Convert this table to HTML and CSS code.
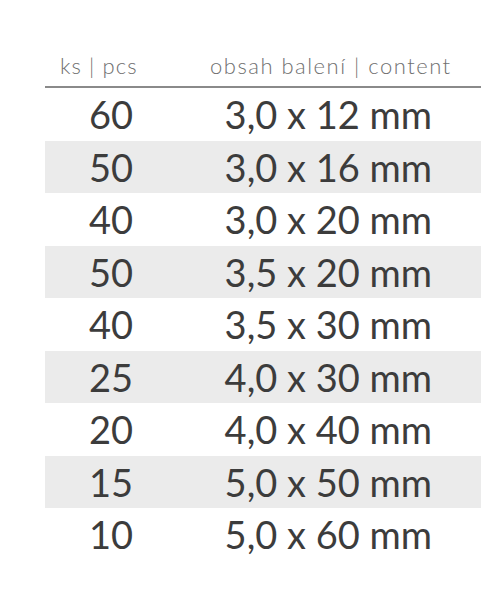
FILE: index.html
```html
<!DOCTYPE html>
<html>
<head>
<meta charset="utf-8">
<link rel="stylesheet" href="styles.css">
</head>
<body>
<div class="table">
  <div class="head">
    <div class="h1">ks | pcs</div>
    <div class="h2">obsah balení | content</div>
  </div>
  <div class="row"><div class="qty">60</div><div class="size">3,0 x 12 mm</div></div>
  <div class="row alt"><div class="qty">50</div><div class="size">3,0 x 16 mm</div></div>
  <div class="row"><div class="qty">40</div><div class="size">3,0 x 20 mm</div></div>
  <div class="row alt"><div class="qty">50</div><div class="size">3,5 x 20 mm</div></div>
  <div class="row"><div class="qty">40</div><div class="size">3,5 x 30 mm</div></div>
  <div class="row alt"><div class="qty">25</div><div class="size">4,0 x 30 mm</div></div>
  <div class="row"><div class="qty">20</div><div class="size">4,0 x 40 mm</div></div>
  <div class="row alt"><div class="qty">15</div><div class="size">5,0 x 50 mm</div></div>
  <div class="row"><div class="qty">10</div><div class="size">5,0 x 60 mm</div></div>
</div>
</body>
</html>
```
FILE: styles.css
```css
html, body {
  margin: 0;
  padding: 0;
  background: #ffffff;
}
body {
  font-family: "Lato", "DejaVu Sans", sans-serif;
}
.table {
  margin: 45px 0 0 45px;
  width: 436px;
}
.head {
  display: flex;
  height: 41px;
  border-bottom: 2px solid #8a8a8a;
  align-items: center;
  color: #707070;
  font-size: 22px;
  font-weight: 300;
  letter-spacing: 1.1px;
}
.h1 {
  width: 165px;
  padding-left: 15px;
  box-sizing: border-box;
}
.h2 {
  flex: 1;
  letter-spacing: 1.5px;
}
.row {
  display: grid;
  grid-template-columns: 88px 1fr;
  height: 52.5px;
  align-items: center;
  color: #3c3c3c;
  font-size: 38px;
  font-weight: 400;
}
.row.alt {
  background: #ebebeb;
}
.qty {
  text-align: right;
}
.size {
  text-align: right;
  padding-right: 49px;
}
```
